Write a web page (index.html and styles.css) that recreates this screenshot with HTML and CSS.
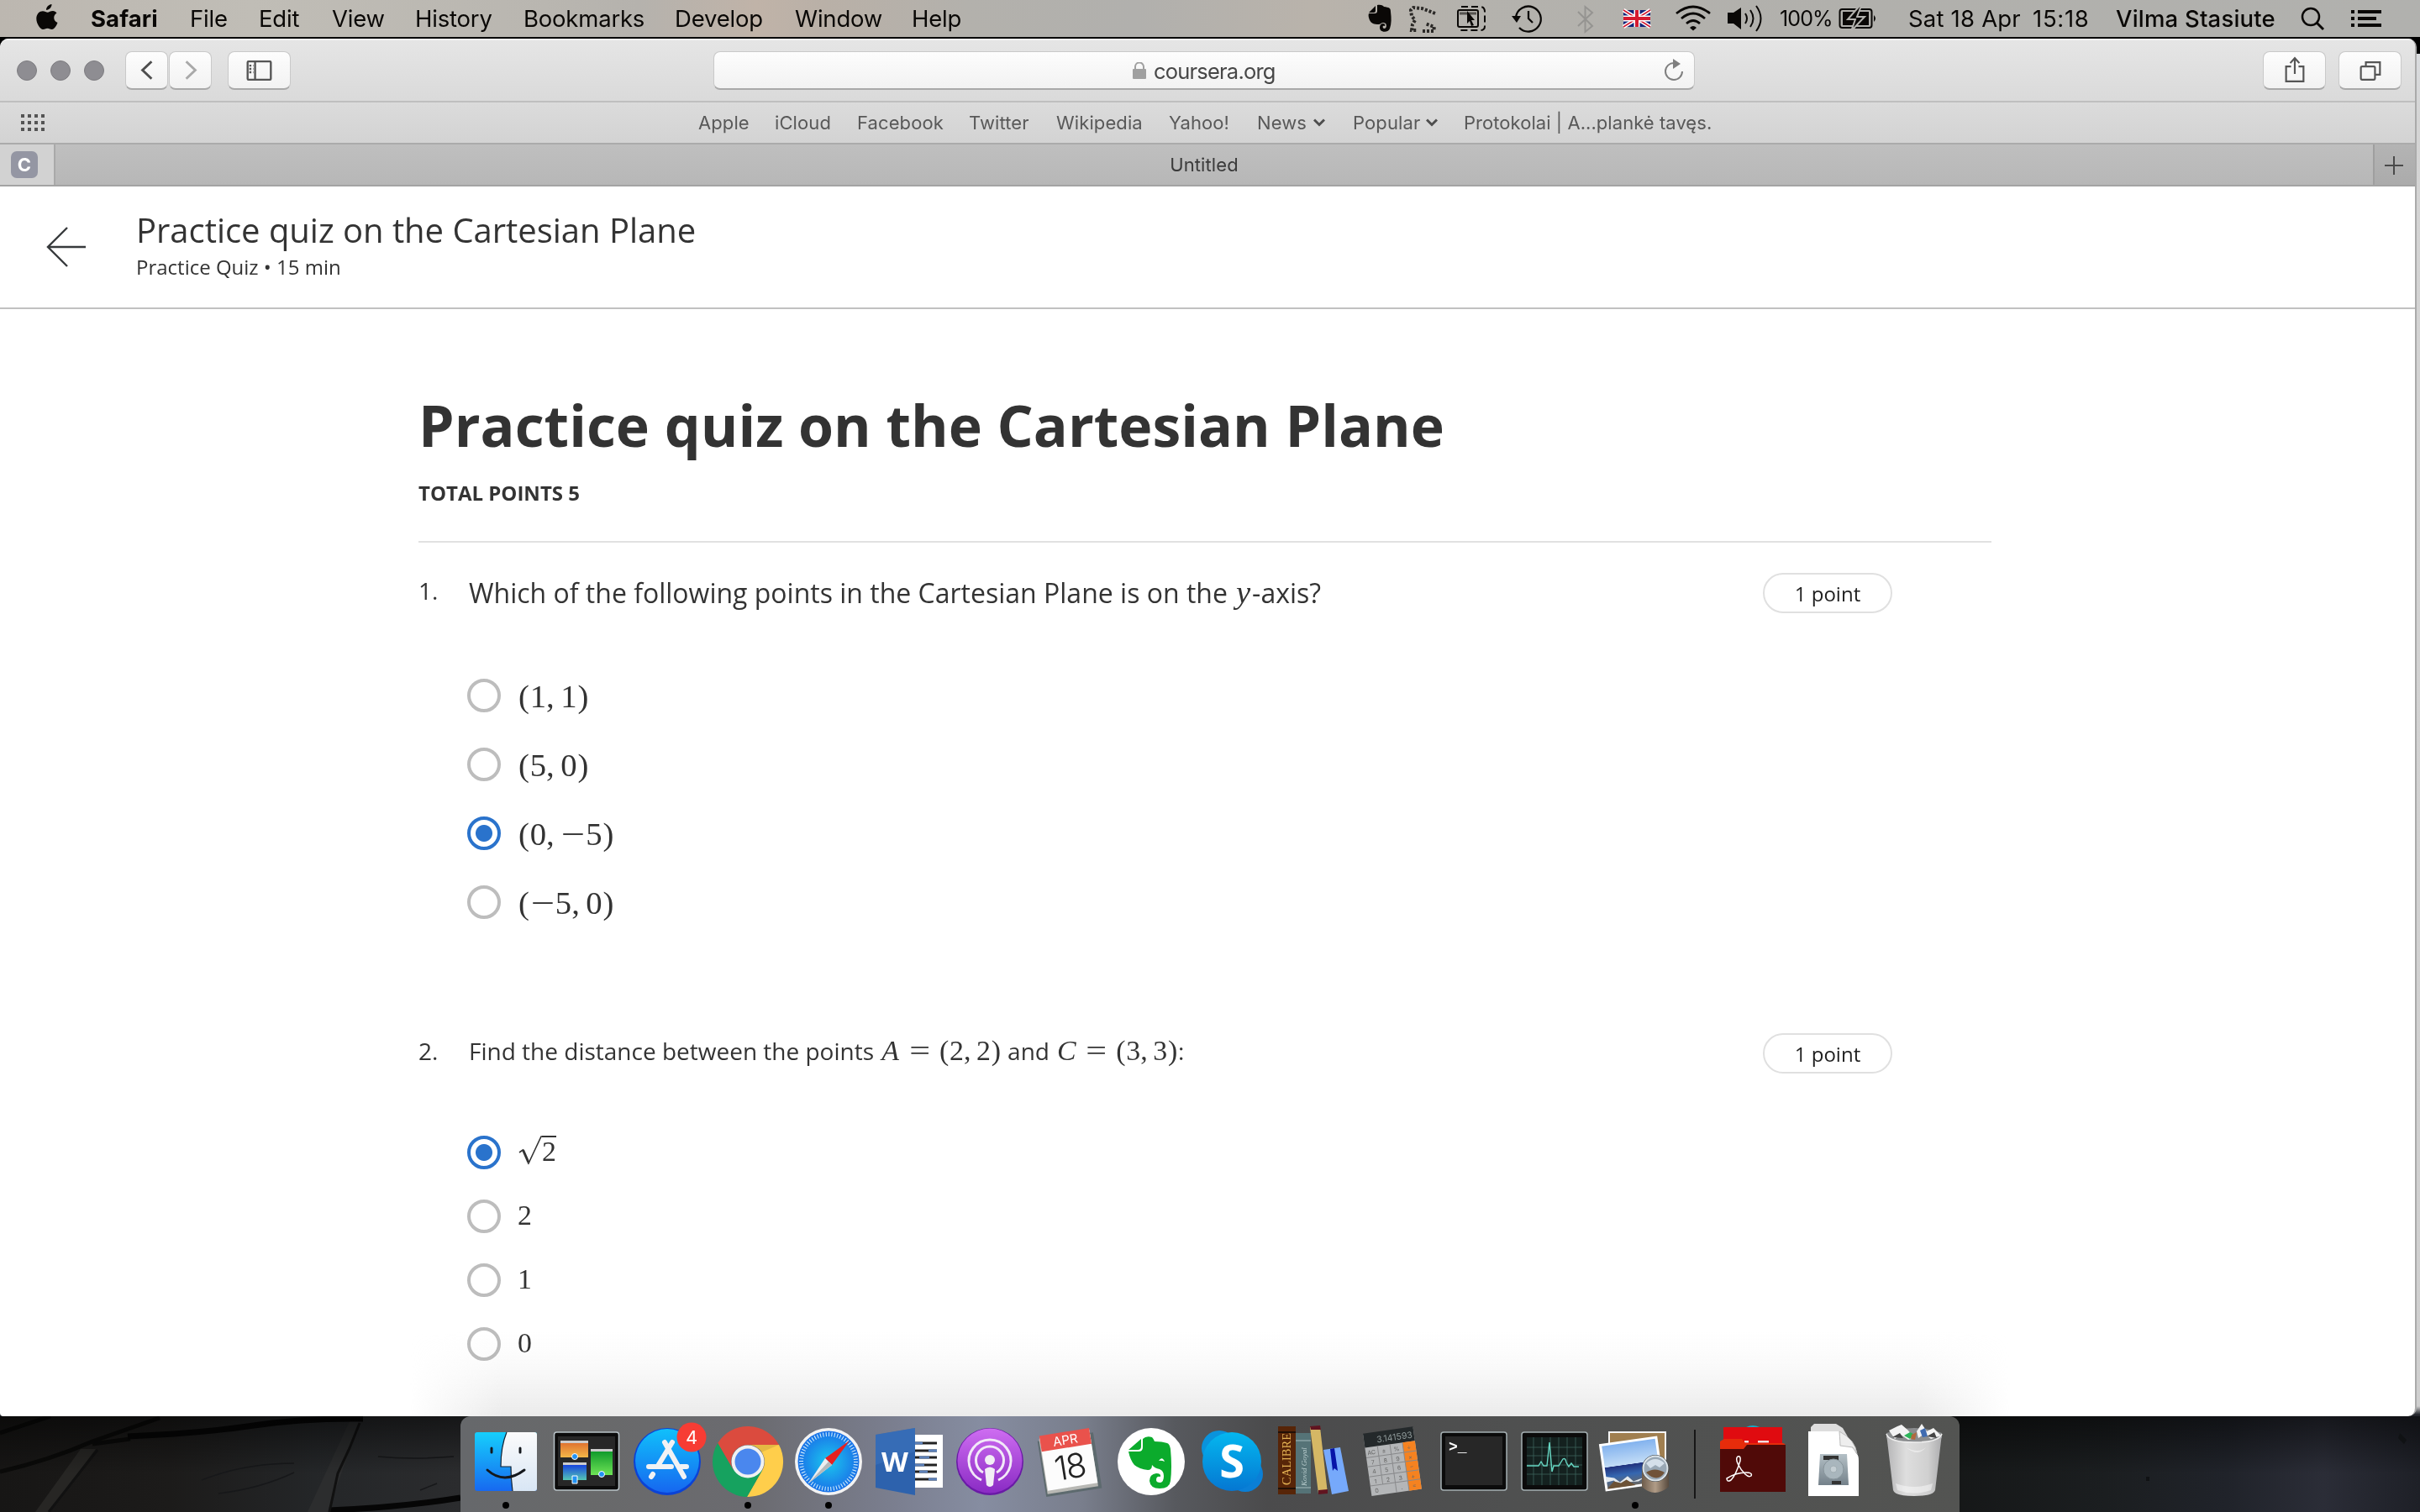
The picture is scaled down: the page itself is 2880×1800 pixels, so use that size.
FILE: index.html
```html
<!DOCTYPE html>
<html lang="en">
<head>
<meta charset="utf-8">
<title>Practice quiz on the Cartesian Plane</title>
<link rel="stylesheet" href="styles.css">
</head>
<body>
<div class="desktop">

<header class="menubar">
  <svg class="mi-apple" viewBox="0 0 42 44"><path fill="#0a0806" d="M25.500 5c.4 3-2.800 7-6.400 7-.4-3.300 3-6.700 6.400-7zM31.500 15.500c-4.700 2.900-4.200 9.300 1 11.500-1.200 3.300-3.800 8-6.700 8-2.100 0-2.800-1.300-5.300-1.300-2.500 0-3.300 1.300-5.300 1.300-3.400 0-7.900-7-7.900-12.800 0-5.700 3.700-9 7.600-9 2.400 0 4.300 1.600 5.800 1.600 1.400 0 3.500-1.700 6.300-1.700 1.800.1 3.400.9 4.500 2.400z"/></svg>
  <span class="m m-safari">Safari</span><span class="m m-file">File</span><span class="m m-edit">Edit</span><span class="m m-view">View</span><span class="m m-history">History</span><span class="m m-bookmarks">Bookmarks</span><span class="m m-develop">Develop</span><span class="m m-window">Window</span><span class="m m-help">Help</span>
  <svg class="mi-status" viewBox="1600 0 506 44" fill="none" stroke="#0a0806" stroke-width="2">
    <path fill="#0a0806" stroke="none" d="M1637 7v6q0 2-2 2h-6zM1639 6c5-1 7 1 8 2 6 1 8 1 8 6 1 8 1 14-1 20-1 4-8 5-11 2-2-3-1-8 3-8 2 0 3 2 2 3-3-1-3 2-1 3 4 0 3-5 2-6-4-3-6 1-8 1-6 0-9-1-11-5-1-3-2-5-1-8h7q3 0 3-3z"/>
    <path stroke-width="4" stroke="#2b2927" stroke-dasharray="3 2" d="M1708 16l-16-6-10-1-3 3 1 7 4 5-3 5-1 7h6M1693 37h13l1-5-11-4"/>
    <path stroke-dasharray="8 4" d="M1739 8h22q6 0 6 6v17q0 5-5 5h-24"/>
    <rect x="1735" y="12" width="24" height="20" rx="2"/><path stroke-width="3" stroke="#55534f" d="M1737 16h20"/>
    <path fill="#0a0806" stroke="none" d="M1746 13l9 11h-4l3 6-3 1-2-6-3 3z"/>
    <path stroke-width="2.300" d="M1804 20a15 15 0 1 1 4 13M1819 13v9l5 5"/><path fill="#0a0806" stroke="none" d="M1799 19h11l-5 8z"/>
    <path stroke="#959491" d="M1878 14l17 17-8.500 7V8l8.500 7-17 16"/>
    <g stroke="none"><path fill="#12237a" d="M1932 12h32v20h-32z"/><path stroke="#fff" stroke-width="4.500" d="M1932 12l32 20M1964 12l-32 20"/><path stroke="#d51a30" stroke-width="1.500" d="M1932 12l32 20M1964 12l-32 20"/><path stroke="#fff" stroke-width="7" d="M1932 22h32M1948 12v20"/><path stroke="#d51a30" stroke-width="4" d="M1932 22h32M1948 12v20"/></g>
    <path stroke-width="2.800" d="M1995 16q20-16 40 0M2001 22q14-12 28 0M2007 28q8-7 16 0"/><path fill="#0a0806" stroke="none" d="M2011 33q4-4 8 0l-4 3.500z"/>
    <path fill="#0a0806" stroke="none" d="M2056 15h7l9-6v26l-9-7h-7z"/><path d="M2077 16q4 6 0 12M2083 12q7 10 0 20M2090 7q11 15 0 30"/>
  </svg>
  <span class="m m-pct">100%</span>
  <svg class="mi-batt" viewBox="0 0 83 44"><rect x="1.500" y="11" width="38" height="22" rx="3" fill="none" stroke="#0a0806" stroke-width="2"/><path fill="#0a0806" d="M5 14h31v16H5zM42 18q4 4 0 8z"/><path fill="#0a0806" stroke="#b4b3af" stroke-width="2" d="M25 7L11 23h9l-5 14 16-17h-9l5-13z"/></svg>
  <span class="m m-date">Sat 18 Apr</span><span class="m m-time">15:18</span><span class="m m-user">Vilma Stasiute</span>
  <svg class="mi-end" viewBox="0 0 142 44" fill="none" stroke="#0a0806"><circle cx="12" cy="20" r="10" stroke-width="2.500"/><path stroke-width="3" d="M19 27l8 8"/><path stroke-width="4" d="M60 14h4M60 22h4M60 30h4M68 14h28M68 22h22M68 30h28"/></svg>
</header>

<main class="stage">
<section class="window">
  <div class="toolbar">
    <div class="lights"><i></i><i></i><i></i></div>
    <div class="btn nav"><svg viewBox="0 0 50 45"><path fill="none" stroke="#4e4e4e" stroke-width="3" d="M31 12L20 22.500 31 33"/></svg></div>
    <div class="btn nav fwd"><svg viewBox="0 0 50 45"><path fill="none" stroke="#a9a9a9" stroke-width="3" d="M20 12l11 10.500L20 33"/></svg></div>
    <div class="btn side"><svg viewBox="0 0 74 45" fill="none" stroke="#555" stroke-width="2.400"><rect x="23" y="12" width="28" height="22" rx="1"/><path d="M32 12v22"/><path stroke-dasharray="2.500 2" d="M25 17h5M25 21h5M25 25h5"/></svg></div>
    <div class="address">
      <svg class="lock" viewBox="0 0 16 20"><rect x="0" y="8" width="16" height="12" rx="1" fill="#a0a0a0"/><path fill="none" stroke="#a0a0a0" stroke-width="2" d="M3 9V5.500a5 5 0 0 1 10 0V9"/></svg>
      <span>coursera.org</span>
      <svg class="reload" viewBox="0 0 24 28"><path fill="none" stroke="#7f7f7f" stroke-width="2" d="M12.500 5A10 10 0 1 0 22 15"/><path fill="#7f7f7f" d="M11 0l9 6-9 6z"/></svg>
    </div>
    <div class="btn share"><svg viewBox="0 0 74 45" fill="none" stroke="#555" stroke-width="2.200"><path d="M33 18h-6v18h21V18h-6M37.500 27V9M32 14l5.500-6 5.500 6"/></svg></div>
    <div class="btn tabs"><svg viewBox="0 0 74 45" fill="none" stroke="#555" stroke-width="2.200"><rect x="26" y="18" width="17" height="16" rx="1.500"/><path d="M32 18v-5h17v15h-6"/></svg></div>
  </div>

  <div class="favbar">
    <svg class="gridicon" viewBox="0 0 28 20" stroke="#555" stroke-width="4" stroke-dasharray="4 4"><path d="M0 2h28M0 10h28M0 18h28"/></svg>
    <span class="f f-apple">Apple</span><span class="f f-icloud">iCloud</span><span class="f f-fb">Facebook</span><span class="f f-tw">Twitter</span><span class="f f-wiki">Wikipedia</span><span class="f f-yahoo">Yahoo!</span><span class="f f-news">News</span><svg class="chev c-news" viewBox="0 0 14 10"><path d="M1 1.500l6 6 6-6"/></svg><span class="f f-pop">Popular</span><svg class="chev c-pop" viewBox="0 0 14 10"><path d="M1 1.500l6 6 6-6"/></svg><span class="f f-prot">Protokolai | A...plankė tavęs.</span>
  </div>

  <div class="tabbar">
    <div class="pinned"><b>C</b></div>
    <div class="tab">Untitled</div>
    <div class="plus"><svg viewBox="0 0 50 48"><path fill="none" stroke="#4a4a4a" stroke-width="2" d="M12 25h22M23 14v22"/></svg></div>
  </div>

  <div class="page">
    <div class="pagehead">
      <svg class="back" viewBox="0 0 48 48"><path fill="none" stroke="#373a3c" stroke-width="2.400" d="M47 24H2M25 1L2 24l23 23"/></svg>
      <div>
        <div class="ptitle">Practice quiz on the Cartesian Plane</div>
        <div class="psub">Practice Quiz • 15 min</div>
      </div>
    </div>

    <div class="quiz">
      <h1>Practice quiz on the Cartesian Plane</h1>
      <div class="total">TOTAL POINTS 5</div>

      <div class="question q1">
        <span class="num">1.</span>
        <span class="ask ask-lg">Which of the following points in the Cartesian Plane is on the <span class="math"><i class="vy">y</i></span>-axis?</span>
        <span class="pill">1 point</span>
      </div>
      <div class="options">
        <label class="opt"><i class="radio"></i><span class="math"><s>(</s><b>1</b><u>,</u><b>1</b><s>)</s></span></label>
        <label class="opt"><i class="radio"></i><span class="math"><s>(</s><b>5</b><u>,</u><b>0</b><s>)</s></span></label>
        <label class="opt"><i class="radio on"></i><span class="math"><s>(</s><b>0</b><u>,</u><em>−</em><b>5</b><s>)</s></span></label>
        <label class="opt"><i class="radio"></i><span class="math"><s>(</s><em>−</em><b>5</b><u>,</u><b>0</b><s>)</s></span></label>
      </div>

      <div class="question q2">
        <span class="num">2.</span>
        <span class="ask">Find the distance between the points <span class="math"><i class="va">A</i><em class="eq">=</em><s>(</s><b>2</b><u>,</u><b>2</b><s>)</s></span> and <span class="math"><i class="vc">C</i><em class="eq">=</em><s>(</s><b>3</b><u>,</u><b>3</b><s>)</s></span>:</span>
        <span class="pill">1 point</span>
      </div>
      <div class="options small">
        <label class="opt"><i class="radio on"></i><span class="math root"><svg viewBox="0 0 28 35"><path fill="none" stroke="#333" stroke-width="1.600" d="M1 20l5-3.500"/><path fill="none" stroke="#333" stroke-width="3" d="M5.500 17L12 32"/><path fill="none" stroke="#333" stroke-width="1.600" d="M11.500 34L27 1h2"/></svg><b>2</b></span></label>
        <label class="opt"><i class="radio"></i><span class="math"><b>2</b></span></label>
        <label class="opt"><i class="radio"></i><span class="math"><b>1</b></span></label>
        <label class="opt"><i class="radio"></i><span class="math"><b>0</b></span></label>
      </div>
    </div>
  </div>
</section>
</main>

<footer class="shelf">
  <svg class="wall" viewBox="0 0 2880 114" preserveAspectRatio="none">
    <defs>
      <linearGradient id="wl"><stop offset="0" stop-color="#171615"/><stop offset=".07" stop-color="#1c1b1a"/><stop offset=".13" stop-color="#242628"/><stop offset=".19" stop-color="#2b2c2e"/><stop offset=".8" stop-color="#151717"/><stop offset=".87" stop-color="#1b1e20"/><stop offset=".92" stop-color="#20232a"/><stop offset=".96" stop-color="#2b2d37"/><stop offset="1" stop-color="#1e2027"/></linearGradient>
      <linearGradient id="ws" x2="0" y2="1"><stop offset="0" stop-color="#000" stop-opacity=".5"/><stop offset=".6" stop-color="#000" stop-opacity="0"/></linearGradient>
    </defs>
    <path fill="url(#wl)" d="M0 0h2880v114H0z"/>
    <path fill="#272624" d="M42 114L96 39l18 0-56 75z"/>
    <path fill="#2c2d2e" d="M366 114L416 6l12 0-38 108z"/>
    <path fill="none" stroke="#0a0a09" stroke-width="5" d="M0 20L60 0M0 66q60-14 110-36L190 2M110 33l45-6"/>
    <path fill="none" stroke="#060606" stroke-width="7" d="M152 24q90-4 150-13T432 3M392 112q90-4 156-15"/>
    <path fill="none" stroke="#111" stroke-width="3" d="M428 8l-12 30-14 30-10 46M116 40L58 114"/>
    <path fill="none" stroke="#17181a" stroke-width="1.500" d="M240 76q50-20 110-20M260 92q50-6 90-25M450 48q40 4 90 0M500 88l20-8"/>
    <path fill="url(#ws)" d="M0 0h2880v114H0z"/>
    <path fill="#101214" d="M2554 72h4v5h-4zM2856 20l8 8-3 5-7-7z"/>
  </svg>
  <div class="dock">
    <svg class="cell" viewBox="0 0 96 114"><defs><linearGradient id="fb" x2="0" y2="1"><stop stop-color="#16cffc"/><stop offset="1" stop-color="#1769f0"/></linearGradient><linearGradient id="fw" x2="0" y2="1"><stop stop-color="#fbfbfb"/><stop offset="1" stop-color="#d8e6f5"/></linearGradient></defs><rect x="11" y="19" width="74" height="70" rx="3" fill="url(#fb)"/><path fill="url(#fw)" d="M49 19h33q3 0 3 3v64q0 3-3 3H56q-2-15-2-29H42q0-24 7-41z"/><path fill="none" stroke="#123" stroke-width="1.200" d="M49 19q-7 17-7 41h12q0 14 2 29"/><path fill="none" stroke="#14181d" stroke-width="3" stroke-linecap="round" d="M31 38v5M65 38v5M26 64q20 18 44 0"/><circle cx="48" cy="106" r="4"/></svg>

    <svg class="cell" viewBox="0 0 96 114"><defs><linearGradient id="mo" x2="0" y2="1"><stop stop-color="#df7430"/><stop offset="1" stop-color="#f5b748"/></linearGradient><linearGradient id="mg" x2="0" y2="1"><stop stop-color="#119b2c"/><stop offset="1" stop-color="#6ee356"/></linearGradient><linearGradient id="mb" x2="0" y2="1"><stop stop-color="#1744dd"/><stop offset="1" stop-color="#55c7b4"/></linearGradient></defs><rect x="9.500" y="19" width="77" height="69" rx="3" fill="#0c0c0c" stroke="#b9c3c8" stroke-width="1.500"/><path fill="#272727" d="M14 24h68v59H14z"/><path fill="#ccc" d="M17 29h33v3H17zM53 39h26v3H53zM20 55h28v3H20z"/><path fill="url(#mo)" d="M17 32h33v17H17z"/><path fill="url(#mg)" d="M53 42h26v28H53z"/><path fill="url(#mb)" d="M20 58h28v18H20z"/><g fill="#2292f4" stroke="#fff" stroke-width="1"><circle cx="34" cy="48" r="3.500"/><circle cx="66" cy="69" r="3.500"/><path d="M31 71h6v9h-6z"/></g></svg>

    <svg class="cell" viewBox="0 0 96 114"><defs><linearGradient id="ap" x2="0" y2="1"><stop stop-color="#10c0fb"/><stop offset="1" stop-color="#1667f0"/></linearGradient></defs><circle cx="48" cy="54" r="40" fill="#0b43d6"/><circle cx="48" cy="53" r="38" fill="url(#ap)"/><path fill="none" stroke="#f1f2f4" stroke-width="6" stroke-linecap="round" d="M26 60h27M64 60h7M54 31L37 59M31 69l-2 3M45 31l23 41"/><circle cx="77" cy="25" r="17.500" fill="#f73c34"/><text x="77" y="32.500" class="badge">4</text></svg>

    <svg class="cell" viewBox="0 0 96 114"><path fill="#db4b3e" d="M12.200 32A42 42 0 0 1 85 34H48A20 20 0 0 0 30.700 64z"/><path fill="#ffce4b" d="M85 34A42 42 0 0 1 47 96L65.300 64A20 20 0 0 0 48 34z"/><path fill="#16a25f" d="M47 96A42 42 0 0 1 12.200 32L30.700 64h34.600z"/><path fill="#000" opacity=".1" d="M48 34h37L64 43z"/><circle cx="48" cy="54" r="19.500" fill="#f1f1f1"/><circle cx="48" cy="54" r="15.500" fill="#4a87ee"/><circle cx="48" cy="106" r="4"/></svg>

    <svg class="cell" viewBox="0 0 96 114"><defs><radialGradient id="sf"><stop stop-color="#1bc8ee"/><stop offset="1" stop-color="#1a72e8"/></radialGradient></defs><circle cx="48" cy="54" r="40" fill="#f3f3f3"/><circle cx="48" cy="54" r="36.500" fill="url(#sf)"/><circle cx="48" cy="54" r="32.500" fill="none" stroke="#d8f0fc" stroke-width="5" stroke-dasharray="1 2.400"/><path fill="#e8201f" d="M73 29L44 50l8 8z"/><path fill="#eceff1" d="M44 50l8 8-28 22z"/><path fill="#b5b9bb" d="M52 58l-4-4-24 26z"/><circle cx="48" cy="106" r="4"/></svg>

    <svg class="cell" viewBox="0 0 96 114"><path fill="#fff" d="M50 22h38v63H50z"/><path fill="none" stroke="#222" stroke-width="3" d="M54 32h27M54 41h27M54 49h27M54 58h27M54 66h27M54 75h27"/><path fill="none" stroke="#5c80b8" stroke-width="3" d="M54 32h10M71 41h10M60 49h12M54 58h12M60 66h10M71 75h10"/><path fill="#2d62ad" d="M8 22l47-8v80L8 85z"/><path fill="#3f76c0" d="M8 22l47-8v28L8 58z" opacity=".5"/><text x="31" y="66" class="word">W</text></svg>

    <svg class="cell" viewBox="0 0 96 114"><defs><linearGradient id="pd" x2="0" y2="1"><stop stop-color="#ce6df1"/><stop offset="1" stop-color="#8a2bc4"/></linearGradient></defs><circle cx="48" cy="54" r="40" fill="#6a1aa6"/><circle cx="48" cy="53" r="38.500" fill="url(#pd)"/><g fill="none" stroke="#f2e9f8" stroke-width="3"><path d="M38 76a25 25 0 1 1 20 0"/><path d="M40 67a16.500 16.500 0 1 1 16 0"/></g><circle cx="48" cy="52" r="6" fill="#f2eff5"/><path fill="#f2eff5" d="M42 63q6-5 12 0l-2 19q-4 4-8 0z"/></svg>

    <svg class="cell" viewBox="0 0 96 114"><g transform="rotate(-9 48 54)"><path fill="#5d6a6e" d="M13 24h67v67H13z"/><path fill="#b8b8b4" d="M15 22h61v66H15z"/><path fill="#fcfcfc" d="M16 20h60v64H16z"/><path fill="#e9524c" d="M16 18h60v19H16z"/><text x="46" y="33" class="apr">APR</text><text x="46" y="74" class="day">18</text></g></svg>

    <svg class="cell" viewBox="0 0 96 114"><circle cx="48" cy="54" r="40" fill="#fff"/><path fill="#0bab2c" d="M21 40L36 27v9q0 4-4 4zM38 27q4-4 11-2 2 2 3 5 9 0 15 2 3 1 4 7 2 22 0 38-1 9-13 9-11 0-12-9 0-8 8-9 6 0 5 4-5-1-5 4 0 3 5 3 4-1 4-8 0-6-5-8-6-1-9-5 0 6-5 6-10-1-16-6-5-6-7-16h12q5 0 5-5z"/><path fill="#fff" d="M57 53q4-6 7 1-4-2-7-1z"/></svg>

    <svg class="cell" viewBox="0 0 96 114"><defs><linearGradient id="sk" x2="0" y2="1"><stop stop-color="#04b7ef"/><stop offset="1" stop-color="#0577d2"/></linearGradient></defs><circle cx="33" cy="38" r="21" fill="#0a93dc"/><circle cx="64" cy="69" r="21" fill="#0a7fd6"/><circle cx="48" cy="54" r="35" fill="url(#sk)"/><text x="48" y="73" class="skype">S</text></svg>

    <svg class="cell" viewBox="0 0 96 114"><path fill="#572508" d="M7 12h21v81H7z"/><path stroke="#221006" stroke-width="2" d="M7 19h21M7 86h21"/><path fill="#557377" d="M28 20h18v72H28z"/><path stroke="#8ba4a6" stroke-width="1.500" d="M28 29h18M28 85h18"/><path fill="#d5b765" d="M45 13h12l9 79H55z"/><path fill="#611420" d="M45 12l12-1 1 5H46zM55 88l11-1v5l-11 1z"/><path fill="#76a9fb" d="M61 40l20-3 10 52-20 4z"/><path fill="#0713a8" d="M69 39l5-1 4 27-4-3-2 3z"/><text transform="translate(22 82) rotate(-90)" class="cal">CALIBRE</text><text transform="translate(41 83) rotate(-90)" class="kov">Kovid Goyal</text></svg>

    <svg class="cell" viewBox="0 0 96 114"><g transform="rotate(-8 48 54)"><path fill="#b4b6b8" d="M17 17h60v74H17z"/><path fill="#24292b" d="M17 16h60v17H17z"/><path fill="#f58220" d="M62 33h15v58H62z"/><path fill="none" stroke="#88898b" stroke-width="1" d="M17 45h60M17 56h60M17 68h60M17 79h60M32 33v46M47 33v58M62 33v58"/><text x="75" y="29" class="lcd">3.141593</text><g class="keys"><text x="24" y="42">AC</text><text x="39" y="42">±</text><text x="54" y="42">%</text><text x="69" y="42">÷</text><text x="24" y="54">7</text><text x="39" y="54">8</text><text x="54" y="54">9</text><text x="69" y="54">×</text><text x="24" y="65">4</text><text x="39" y="65">5</text><text x="54" y="65">6</text><text x="69" y="65">−</text><text x="24" y="77">1</text><text x="39" y="77">2</text><text x="54" y="77">3</text><text x="69" y="77">+</text><text x="24" y="88">0</text><text x="54" y="88">.</text><text x="69" y="88">=</text></g></g></svg>

    <svg class="cell" viewBox="0 0 96 114"><rect x="9" y="19" width="78" height="69" rx="3" fill="#0b0b0b" stroke="#a5b0b3" stroke-width="1.500"/><path fill="#272727" d="M14 24h68v58H14z"/><text x="18" y="42" class="term">&gt;_</text></svg>

    <svg class="cell" viewBox="0 0 96 114"><rect x="9" y="19" width="78" height="69" rx="3" fill="#0b0b0b" stroke="#a5b0b3" stroke-width="1.500"/><path fill="#14211f" d="M15 25h66v57H15z"/><path fill="none" stroke="#3a625c" stroke-width=".8" d="M15 37h66M15 47h66M15 58h66M15 69h66M23 25v57M33 25v57M43 25v57M53 25v57M63 25v57M73 25v57"/><path fill="none" stroke="#66d6c2" stroke-width="1.400" d="M15 59h14l3-5 3 5h4l3-28 3 35 2-7h6l5-8q3-2 4 4l3 5 3-4 3 4h6"/></svg>

    <svg class="cell" viewBox="0 0 96 114"><defs><linearGradient id="sky" x2="0" y2="1"><stop stop-color="#7fb0ee"/><stop offset=".5" stop-color="#c2dcf6"/><stop offset=".51" stop-color="#22337f"/><stop offset=".72" stop-color="#3567b0"/><stop offset="1" stop-color="#6f6658"/></linearGradient><linearGradient id="lp"><stop stop-color="#6d5c4c"/><stop offset=".5" stop-color="#b09c87"/><stop offset="1" stop-color="#584a3e"/></linearGradient></defs><path fill="#a07f50" stroke="#f5f5f5" stroke-width="2" d="M17 19h67v50H17z"/><g transform="rotate(-8 40 57)"><path fill="url(#sky)" stroke="#fff" stroke-width="3" d="M10 30h67v54H10z"/><path fill="#e4eaee" d="M11 68l10 3 6 6 10-6 6 7 14-3-8 4-14-1-9 4-6-8-9 1z"/><path fill="#6c5236" d="M11 83l9-8 8 3 7-3 10 8z"/></g><path fill="url(#lp)" d="M56 60v24q15 14 32 0V60z"/><circle cx="72" cy="62" r="16" fill="#2e3438"/><circle cx="72" cy="62" r="14.500" fill="#99a8b5" stroke="#dce4e9" stroke-width="2"/><path fill="#705238" d="M61 67q10-7 22 0-9 13-22 0z"/><path fill="#d5e0ea" d="M61 56q11-10 22 0l-6 5-5-3-6 4z"/><circle cx="48" cy="106" r="4"/></svg>

    <div class="sep"></div>

    <svg class="cell" viewBox="0 0 96 114"><path fill="#e00b10" d="M13 13h70v30H13z"/><path fill="#1aa9c4" d="M40 13q8-4 16 0z"/><path fill="#f4dede" d="M38 29h5v2.500h-5zM54 29h13v2.500H54z"/><path fill="#e62c0b" d="M9 42V30l5-3h21l4 5h44q4 0 4 4v6z"/><path fill="#500a08" d="M9 39h28l4-5h46v56H9z"/><path fill="none" stroke="#fff" stroke-width="1.500" d="M17 74q0 5 5 2c4-4 8-13 11-23q1-6-3-5c-4 3 2 14 9 21q4 4 7 2 2-4-6-4-12 0-23 7z"/></svg>

    <svg class="cell" viewBox="0 0 96 114"><defs><linearGradient id="hd" x2="0" y2="1"><stop stop-color="#b4c0c6"/><stop offset="1" stop-color="#74818a"/></linearGradient></defs><path fill="#ddd" d="M21 13l4-4h26l8 5 15 26v30H21z"/><path fill="#fff" d="M18 18h37l21 27q2 2 2 8v42H18z"/><path fill="#eee" stroke="#bbb" d="M55 18q1 14 1 17l15 2 5 8q-2-17-21-27z"/><path fill="url(#hd)" d="M32 45h32l2 37H30z"/><path fill="#333" d="M36 47h18v5H36zM46 77h11v4H46z"/><circle cx="48" cy="63" r="12" fill="#a9b6bd" stroke="#87949b"/><circle cx="48" cy="63" r="4" fill="#c4ced3" stroke="#a1adb3"/></svg>

    <svg class="cell" viewBox="0 0 96 114"><defs><linearGradient id="tr"><stop stop-color="#b5b5b6"/><stop offset=".35" stop-color="#dedede"/><stop offset=".75" stop-color="#d0d0d0"/><stop offset="1" stop-color="#acacae"/></linearGradient></defs><path fill="#8b8d8f" d="M15 20q33-12 66 0v6q-33 10-66 0z"/><path fill="#f3f3f3" d="M18 17l10-5 5-2 7 6 9 10-8 2-9-6-7 5zM51 18l6-9 6 9 8-4 9 9-12 4-8-6-7 5z"/><path fill="#2cb45a" d="M36 23l7-4 6 3-6 5z"/><path fill="#3f6bb0" d="M55 17l6-3 3 10-6 1z"/><path fill="#b06a3f" d="M45 22l6-3-2 9-5-1z"/><path fill="#444" d="M22 25l9-5 4 6zM63 24l9-5 3 7z"/><path fill="url(#tr)" d="M15 21q3 10 33 10t33-10l-8 67q-2 7-25 7t-25-7z"/><path fill="none" stroke="#efefef" stroke-width="1.500" d="M15 21q3 10 33 10t33-10"/><path fill="#fff" opacity=".45" d="M38 37q15 8 24 0-9 12-24 0zM26 80q22 8 44 0l-2 8q-20 7-40 0z"/></svg>
  </div>
</footer>
</div>
</body>
</html>
```

FILE: styles.css
```css
* { box-sizing: border-box; }
body { margin: 0; width: 2880px; height: 1800px; overflow: hidden; background: #000; font-family: "Open Sans", sans-serif; color: #333; }
svg { display: block; flex: none; }
.desktop { display: flex; flex-direction: column; width: 2880px; height: 1800px; }

/* menu bar */
.menubar { display: flex; height: 44px; flex: none; font: 27.5px/44px Inter, sans-serif; color: #0a0806; background: linear-gradient(90deg, #bcb7b0 0, #c0bdb6 300px, #b9b6b0 650px, #b5b2ad 760px, #c0b3a8 900px, #b9b0a7 980px, #b3b1ac 1150px, #b1b0ad 1350px, #b9b3ab 1560px, #b4b2ad 1750px, #b1b0ac 2200px, #b1b1ae 2880px); }
.m { white-space: nowrap; flex: none; letter-spacing: -.2px; }
.mi-apple { width: 42px; height: 44px; margin-left: 36px; margin-right: 30px; }
.m-safari { width: 118px; font-weight: 700; letter-spacing: .1px; }
.m-file { width: 82px; }
.m-edit { width: 87px; }
.m-view { width: 99px; }
.m-history { width: 129px; }
.m-bookmarks { width: 180px; }
.m-develop { width: 143px; }
.m-window { width: 139px; }
.m-help { width: 515px; }
.mi-status { width: 506px; height: 44px; }
.m-pct { width: 70px; margin-left: 12px; font-size: 25px; letter-spacing: -.9px; }
.mi-batt { width: 83px; height: 44px; }
.m-date { width: 148px; letter-spacing: .2px; }
.m-time { width: 99px; letter-spacing: .7px; }
.m-user { width: 220px; font-weight: 500; letter-spacing: .2px; }
.mi-end { width: 142px; height: 44px; }

/* browser window */
.stage { height: 1642px; flex: none; padding-top: 2px; background: linear-gradient(#000 20px, #d9dbde 20px, #d4d4d4 100px, #cfcfcf 1630px, #23252b 1640px); }
.window { width: 2876px; height: 1640px; border-right: 2px solid #aaa; border-radius: 10px 10px 10px 4px; overflow: hidden; display: flex; flex-direction: column; background: #fff; }
.toolbar { display: flex; height: 76px; flex: none; padding-top: 13px; border-top: 2px solid #f3f3f3; border-bottom: 2px solid #bfbfbf; background: linear-gradient(#e5e5e5, #dadada); }
.lights { display: flex; gap: 16px; padding: 11px 0 0 20px; width: 149px; }
.lights i { width: 24px; height: 24px; border-radius: 50%; background: #8e8d92; border: 1px solid #7d7c80; }
.btn, .address { height: 46px; border-radius: 8px; border: 1px solid #c9c9c9; border-bottom: 2px solid #a9a9a9; background: linear-gradient(#fdfdfd, #f2f2f2); flex: none; }
.btn svg { width: 100%; height: 45px; margin-top: -1px; }
.nav { width: 51px; margin-right: 1px; }
.side { width: 75px; margin-left: 18px; }
.address { width: 1168px; margin-left: 503px; display: flex; align-items: center; font: 25.500px/42px Inter, sans-serif; color: #474747; letter-spacing: -.8px; }
.address span { padding-top: 2px; }
.lock { width: 16px; height: 20px; margin-left: 498px; margin-right: 9px; }
.reload { width: 24px; height: 28px; margin-left: auto; margin-right: 12px; }
.share { width: 75px; margin-left: 676px; }
.tabs { width: 75px; margin-left: 15px; }
.favbar { display: flex; align-items: center; height: 50px; flex: none; font: 22px/48px Inter, sans-serif; color: #595959; background: linear-gradient(#dbdbdb, #d3d3d3); border-bottom: 2px solid #ababab; }
.gridicon { width: 28px; height: 20px; margin-left: 25px; margin-right: 778px; }
.f { flex: none; white-space: nowrap; letter-spacing: .1px; }
.f-apple { width: 91px; }
.f-icloud { width: 98px; }
.f-fb { width: 133px; }
.f-tw { width: 104px; }
.f-wiki { width: 134px; }
.f-yahoo { width: 105px; }
.f-news { width: 67px; }
.f-pop { width: 87px; }
.chev { width: 14px; height: 10px; fill: none; stroke: #4e4e4e; stroke-width: 3; }
.c-news { margin-right: 33px; }
.c-pop { margin-right: 31px; }
.f-prot { letter-spacing: .05px; }
.tabbar { display: flex; height: 50px; flex: none; font: 22px/48px Inter, sans-serif; color: #3b3b3b; background: linear-gradient(#bfbfbf, #b7b7b7); border-bottom: 2px solid #a3a3a3; }
.pinned { width: 66px; background: #d2d2d2; border-right: 2px solid #a9a9a9; padding: 8px 0 0 13px; }
.pinned b { display: block; width: 32px; height: 32px; border-radius: 7px; background: #9496a3; color: #fff; font-size: 22px; line-height: 32px; text-align: center; }
.tab { flex: 1; text-align: center; padding-right: 24px; letter-spacing: .1px; }
.plus { width: 50px; background: linear-gradient(#b4b4b4, #ababab); border-left: 2px solid #9f9f9f; }
.plus svg { width: 50px; height: 48px; }

/* course page */
.page { flex: 1; position: relative; }
.pagehead { display: flex; height: 146px; padding-top: 24px; border-bottom: 2px solid #c1c1c1; }
.back { width: 48px; height: 48px; margin: 24px 59px 0 55px; }
.ptitle { font-size: 40px; line-height: 56px; white-space: nowrap; letter-spacing: -.03px; }
.psub { font-size: 24px; line-height: 32px; }
.quiz { width: 1872px; margin-left: 498px; padding-top: 92px; }
h1 { margin: 0; font-size: 68px; line-height: 92px; font-weight: 700; white-space: nowrap; }
.total { margin-top: 19px; height: 75px; font-size: 24px; line-height: 32px; font-weight: 700; border-bottom: 2px solid #e1e1e1; }
.question { display: flex; height: 48px; padding-right: 118px; font-size: 28px; line-height: 40px; }
.q1 { margin-top: 36px; }
.q2 { margin-top: 115px; }
.num { width: 60px; padding-top: 1px; }
.ask { flex: 1; white-space: nowrap; padding-top: 1px; }
.ask-lg { font-size: 32px; padding-top: 4px; }
.pill { width: 154px; height: 48px; border: 2px solid #e0e0e0; border-radius: 24px; font-size: 24px; line-height: 45px; text-align: center; color: #1f1f1f; }
.math { font-family: "Liberation Serif", serif; font-size: 1.21em; line-height: 0; }
.math s, .math b, .math u, .math em, .math i { display: inline-block; text-align: center; text-decoration: none; font-weight: 400; }
.math s, .math b, .math u, .math em { font-style: normal; }
.math s { width: .38em; }
.math b { width: .5em; }
.math u { width: .444em; text-align: left; }
.math em { width: .778em; transform: scaleX(1.3); }
.math em.eq { width: 1.333em; }
.math .vy { width: .54em; }
.math .va { width: .73em; }
.math .vc { width: .77em; text-align: left; padding-left: .05em; }
.options { margin: 57px 0 0 58px; font-size: 32px; }
.opt { display: flex; align-items: center; height: 82px; }
.opt .math { line-height: 40px; padding-top: 2px; }
.radio { width: 40px; height: 40px; margin-right: 20px; border: 4px solid #bdbdbd; border-radius: 50%; }
.radio.on { border-color: #2a73cc; background: radial-gradient(circle, #2a73cc 9.500px, #fff 10.500px); }
.small { margin-top: 56px; font-size: 28px; }
.small .opt { height: 76px; }
.small .opt .math { padding: 0 0 3px; }
.small .opt .root { display: flex; align-items: flex-start; height: 40px; padding: 0 0 0 1px; }
.root svg { width: 28px; height: 35px; margin-top: 0; }
.root b { border-top: 2px solid #333; line-height: 33px; height: 33px; }

/* wallpaper and dock */
.shelf { position: relative; height: 114px; flex: none; display: flex; padding-left: 548px; }
.wall { position: absolute; inset: 0; width: 2880px; height: 114px; }
.dock { position: relative; display: flex; width: 1784px; height: 114px; padding-left: 6px; border-radius: 12px 12px 0 0; background: linear-gradient(90deg, #66686b 0, #68696a 150px, #6b6b70 350px, #7b7f90 520px, #868da1 620px, #797e8c 740px, #57595e 850px, #4b4b4c 960px, #4f5050 1250px, #535452 1784px); }
.dock::before { content: ""; position: absolute; left: -60px; right: -60px; bottom: 114px; height: 100px; background: linear-gradient(#ebebeb00, #ebebeb40 40%, #ebebeb 100%); -webkit-mask-image: linear-gradient(90deg, transparent, #000 110px, #000 calc(100% - 110px), transparent); mask-image: linear-gradient(90deg, transparent, #000 110px, #000 calc(100% - 110px), transparent); mix-blend-mode: multiply; }
.cell { width: 96px; height: 114px; }
.sep { width: 44px; padding: 16px 0 0 22px; }
.sep::after { content: ""; display: block; width: 2px; height: 82px; background: #171717; }
.badge { font: 22px Inter, sans-serif; fill: #fff; text-anchor: middle; }
.word { font: 700 33px "Open Sans", sans-serif; fill: #fff; text-anchor: middle; }
.apr { font: 15px Inter, sans-serif; fill: #fff; text-anchor: middle; }
.day { font: 300 40px Inter, sans-serif; fill: #222; text-anchor: middle; letter-spacing: -2px; }
.skype { font: 700 54px "Open Sans", sans-serif; fill: #fff; text-anchor: middle; }
.cal { font: 14.500px "Liberation Serif", serif; fill: #e2b052; }
.kov { font: italic 9px "Liberation Serif", serif; fill: #b8cccd; }
.lcd { font: 10.500px Inter, sans-serif; fill: #8f9a9a; text-anchor: end; }
.keys { font: 7px Inter, sans-serif; fill: #666; text-anchor: middle; }
.term { font: 700 18px "Liberation Mono", monospace; fill: #fff; }
```
